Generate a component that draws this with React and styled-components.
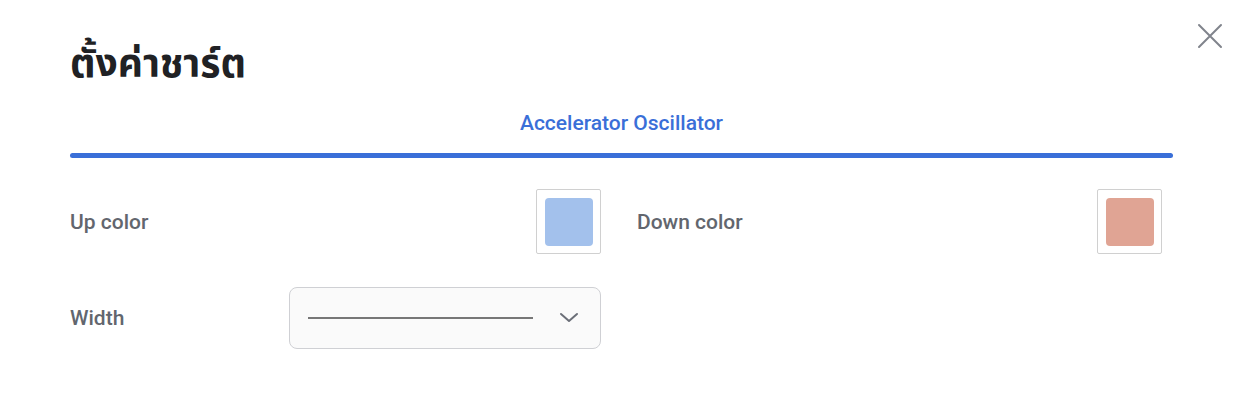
import React from "react";
import styled, { createGlobalStyle } from "styled-components";

const Global = createGlobalStyle`
  html, body { margin: 0; padding: 0; background: #fff; }
  body { font-family: Roboto, "Noto Sans", "Noto Sans Thai", sans-serif; }
`;

const Dialog = styled.div`
  position: relative;
  width: 1248px;
  height: 404px;
  box-sizing: border-box;
  padding: 30px 75px 0 70px;
  background: #fff;
`;

const Title = styled.h1`
  margin: 0;
  font-family: "Noto Sans", "Noto Sans Thai", "Noto Sans Thai UI", Loma, sans-serif;
  font-weight: 700;
  font-size: 39px;
  line-height: 64px;
  color: #202124;
`;

const CloseButton = styled.button`
  position: absolute;
  top: 22px;
  right: 24px;
  width: 28px;
  height: 28px;
  padding: 0;
  border: 0;
  background: none;
  display: flex;
  align-items: center;
  justify-content: center;
  cursor: pointer;
`;

const TabBar = styled.div`
  display: flex;
  flex-direction: column;
  align-items: center;
  margin-top: 16px;
`;

const Tab = styled.div`
  font-size: 21px;
  font-weight: 500;
  color: #3a6fd8;
  line-height: 26px;
  padding-bottom: 17px;
`;

const TabIndicator = styled.div`
  align-self: stretch;
  height: 5px;
  border-radius: 3px;
  background: #3a6fd8;
`;

const Grid = styled.div`
  display: grid;
  grid-template-columns: 531px 525px;
  column-gap: 36px;
  row-gap: 33px;
  margin-top: 31px;
`;

const Field = styled.div`
  display: flex;
  align-items: center;
  justify-content: space-between;
`;

const Label = styled.span`
  font-size: 21px;
  font-weight: 500;
  color: #62666e;
`;

const SwatchFrame = styled.div`
  width: 65px;
  height: 65px;
  box-sizing: border-box;
  border: 1px solid #d0d0d0;
  border-radius: 2px;
  display: flex;
  align-items: center;
  justify-content: center;
`;

const Swatch = styled.div`
  width: 48px;
  height: 48px;
  border-radius: 4px;
  background: ${(p) => p.$color};
`;

const Select = styled.div`
  width: 312px;
  height: 62px;
  box-sizing: border-box;
  border: 1px solid #cfd0d4;
  border-radius: 8px;
  background: #fafafa;
  display: flex;
  align-items: center;
  padding: 0 19px 0 18px;
  gap: 24px;
`;

const LineSample = styled.div`
  flex: 1;
  height: 2px;
  background: #777;
`;

const Chevron = () => (
  <svg width="24" height="24" viewBox="0 0 24 24" fill="none">
    <path d="M4 8l8 7 8-7" stroke="#6b6f78" strokeWidth="2" strokeLinecap="round" strokeLinejoin="round" />
  </svg>
);

const CloseIcon = () => (
  <svg width="26" height="26" viewBox="0 0 26 26" fill="none">
    <path d="M2 2l22 22M24 2L2 24" stroke="#80848c" strokeWidth="2" strokeLinecap="round" />
  </svg>
);

export default function App() {
  return (
    <>
      <Global />
      <Dialog>
        <CloseButton aria-label="close">
          <CloseIcon />
        </CloseButton>
        <Title>ตั้งค่าชาร์ต</Title>
        <TabBar>
          <Tab>Accelerator Oscillator</Tab>
          <TabIndicator />
        </TabBar>
        <Grid>
          <Field>
            <Label>Up color</Label>
            <SwatchFrame>
              <Swatch $color="#a3c1ec" />
            </SwatchFrame>
          </Field>
          <Field>
            <Label>Down color</Label>
            <SwatchFrame>
              <Swatch $color="#e0a494" />
            </SwatchFrame>
          </Field>
          <Field>
            <Label>Width</Label>
            <Select>
              <LineSample />
              <Chevron />
            </Select>
          </Field>
        </Grid>
      </Dialog>
    </>
  );
}
